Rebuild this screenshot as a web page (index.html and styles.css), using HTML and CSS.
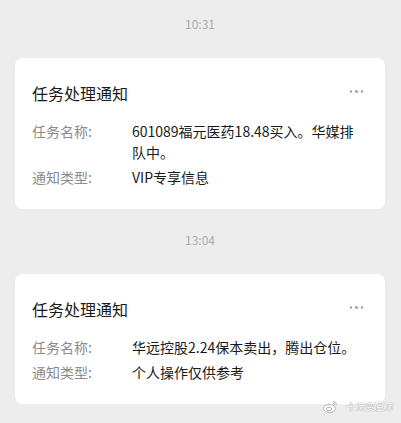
FILE: index.html
```html
<!DOCTYPE html>
<html lang="zh-CN">

<head>
    <meta charset="UTF-8">
    <meta name="viewport" content="width=device-width, initial-scale=1.0">
    <title>任务处理通知</title>

    <link rel="stylesheet" href="styles.css">
</head>

<body>
    <div class="chat">
        <!-- 第一条通知 -->
        <div class="time">10:31</div>
        <div class="card">
            <div class="card-head">
                <span class="card-title">任务处理通知</span>
                <span class="more"><i></i><i></i><i></i></span>
            </div>
            <div class="row">
                <span class="label">任务名称:</span>
                <span class="value">601089福元医药18.48买入。华媒排队中。</span>
            </div>
            <div class="row">
                <span class="label">通知类型:</span>
                <span class="value">VIP专享信息</span>
            </div>
        </div>

        <!-- 第二条通知 -->
        <div class="time">13:04</div>
        <div class="card">
            <div class="card-head">
                <span class="card-title">任务处理通知</span>
                <span class="more"><i></i><i></i><i></i></span>
            </div>
            <div class="row">
                <span class="label">任务名称:</span>
                <span class="value">华远控股2.24保本卖出，腾出仓位。</span>
            </div>
            <div class="row">
                <span class="label">通知类型:</span>
                <span class="value">个人操作仅供参考</span>
            </div>
        </div>
    </div>

    <!-- 水印 -->
    <div class="watermark">
        <svg width="15" height="13" viewBox="0 0 15 13">
            <ellipse cx="6.5" cy="8.5" rx="6" ry="4" fill="#fff" stroke="#b4b4b4" stroke-width="1"/>
            <ellipse cx="6" cy="9" rx="2.6" ry="1.8" fill="none" stroke="#b4b4b4" stroke-width="1"/>
            <path d="M10 1.5 a3.5 3.5 0 0 1 3.5 3.5" fill="none" stroke="#b4b4b4" stroke-width="1"/>
            <path d="M10 3.3 a1.8 1.8 0 0 1 1.8 1.8" fill="none" stroke="#b4b4b4" stroke-width="1"/>
        </svg>
        <span>十万变百万</span>
    </div>
</body>

</html>
```

FILE: styles.css
```css
    body {
        margin: 0;
        background-color: #ededed;
        font-family: "Noto Sans CJK SC", "Noto Sans", sans-serif;
        color: #1a1a1a;
        position: relative;
        min-height: 423px;
    }

    .chat {
        padding: 15px 16px 0 15px;
    }

    .time {
        text-align: center;
        font-size: 12px;
        line-height: 18px;
        color: #ababab;
        margin-bottom: 25px;
    }

    .card {
        background-color: #ffffff;
        border-radius: 8px;
        padding: 23px 22px 21px 17px;
        margin-bottom: 22px;
    }

    .card-head {
        display: flex;
        justify-content: space-between;
        align-items: center;
        margin-bottom: 16px;
    }

    .card-title {
        font-size: 16px;
        line-height: 24px;
        color: #1a1a1a;
    }

    .more {
        display: flex;
        gap: 3px;
        margin-top: -3px;
    }

    .more i {
        width: 2.5px;
        height: 2.5px;
        border-radius: 50%;
        background-color: #a8a8a8;
    }

    .row {
        display: flex;
        font-size: 14px;
        line-height: 21px;
    }

    .row + .row {
        margin-top: 4px;
    }

    .label {
        flex: 0 0 100px;
        color: #8c8c8c;
    }

    .value {
        flex: 1;
        color: #1a1a1a;
    }

/* 右下角水印 */
    .watermark {
        position: absolute;
        right: 7px;
        top: 399px;
        display: flex;
        align-items: center;
        gap: 8px;
        font-size: 9.5px;
        color: #ffffff;
        text-shadow: 0 0 1px #8f8f8f, 0 0 1px #a0a0a0;
    }
```
